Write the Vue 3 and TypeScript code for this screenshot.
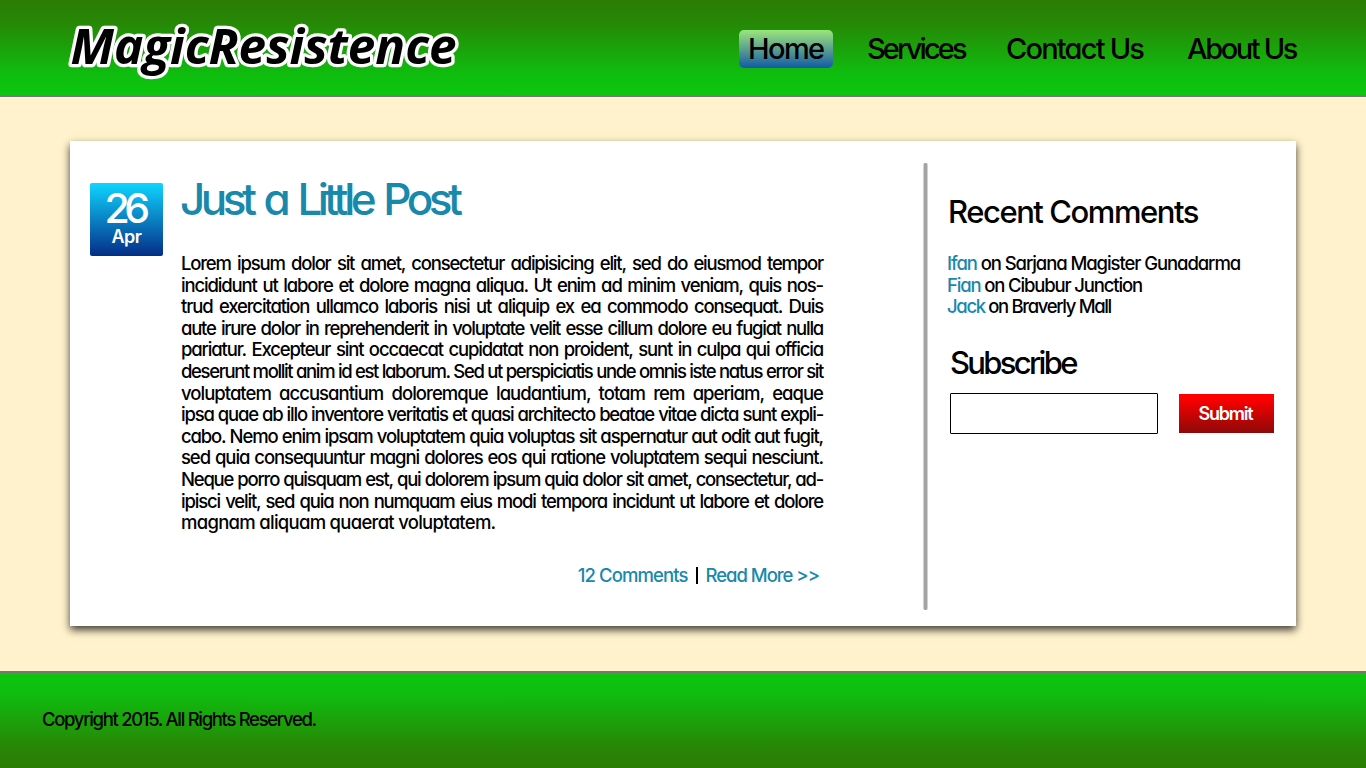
<script setup lang="ts">
interface NavItem {
  label: string
  cls: string
}

interface Line {
  text: string
  tracking: number
}

interface Comment {
  author: string
  place: string
}

const navItems: NavItem[] = [
  { label: 'Home', cls: 'home' },
  { label: 'Services', cls: 'services' },
  { label: 'Contact Us', cls: 'contact' },
  { label: 'About Us', cls: 'about' },
]

const lines: Line[] = [
  { text: 'Lorem ipsum dolor sit amet, consectetur adipisicing elit, sed do eiusmod tempor', tracking: -1.2 },
  { text: 'incididunt ut labore et dolore magna aliqua. Ut enim ad minim veniam, quis nos-', tracking: -1.15 },
  { text: 'trud exercitation ullamco laboris nisi ut aliquip ex ea commodo consequat. Duis', tracking: -1.15 },
  { text: 'aute irure dolor in reprehenderit in voluptate velit esse cillum dolore eu fugiat nulla', tracking: -1.25 },
  { text: 'pariatur. Excepteur sint occaecat cupidatat non proident, sunt in culpa qui officia', tracking: -1.15 },
  { text: 'deserunt mollit anim id est laborum. Sed ut perspiciatis unde omnis iste natus error sit', tracking: -1.37 },
  { text: 'voluptatem accusantium doloremque laudantium, totam rem aperiam, eaque', tracking: -0.98 },
  { text: 'ipsa quae ab illo inventore veritatis et quasi architecto beatae vitae dicta sunt expli-', tracking: -1.22 },
  { text: 'cabo. Nemo enim ipsam voluptatem quia voluptas sit aspernatur aut odit aut fugit,', tracking: -1.16 },
  { text: 'sed quia consequuntur magni dolores eos qui ratione voluptatem sequi nesciunt.', tracking: -1.1 },
  { text: 'Neque porro quisquam est, qui dolorem ipsum quia dolor sit amet, consectetur, ad-', tracking: -1.24 },
  { text: 'ipisci velit, sed quia non numquam eius modi tempora incidunt ut labore et dolore', tracking: -1.17 },
  { text: 'magnam aliquam quaerat voluptatem.', tracking: -0.72 },
]

const comments: Comment[] = [
  { author: 'Ifan', place: 'Sarjana Magister Gunadarma' },
  { author: 'Fian', place: 'Cibubur Junction' },
  { author: 'Jack', place: 'Braverly Mall' },
]
</script>

<template>
  <div class="page">
    <header class="header">
      <svg class="logo" width="400" height="90" viewBox="0 0 400 90">
        <text x="2.5" y="64.4" textLength="386" lengthAdjust="spacingAndGlyphs">MagicResistence</text>
      </svg>
      <nav class="nav">
        <a v-for="item in navItems" :key="item.label" class="nav-item" :class="item.cls">{{ item.label }}</a>
      </nav>
    </header>

    <main class="card">
      <div class="date">
        <span class="day">26</span>
        <span class="month">Apr</span>
      </div>

      <article class="post">
        <h2 class="title">Just a Little Post</h2>
        <div class="body">
          <div v-for="(line, i) in lines" :key="i" class="line" :style="{ letterSpacing: line.tracking + 'px' }">{{ line.text }}</div>
        </div>
        <div class="actions">
          <a class="link comments-link">12 Comments</a>
          <span class="bar"></span>
          <a class="link more-link">Read More &gt;&gt;</a>
        </div>
      </article>

      <div class="divider"></div>

      <aside class="side">
        <h3 class="recent">Recent Comments</h3>
        <ul class="list">
          <li v-for="c in comments" :key="c.author" :class="c.author.toLowerCase()">
            <a class="link">{{ c.author }}</a> on {{ c.place }}
          </li>
        </ul>
        <h3 class="subscribe">Subscribe</h3>
        <form class="form" @submit.prevent>
          <input class="field" type="text" />
          <button class="submit" type="submit">Submit</button>
        </form>
      </aside>
    </main>

    <footer class="footer">Copyright 2015. All Rights Reserved.</footer>
  </div>
</template>

<style>
html,
body {
  margin: 0;
  overflow: hidden;
}
</style>

<style scoped>
.page {
  width: 1366px;
  height: 768px;
  box-sizing: border-box;
  display: flex;
  flex-direction: column;
  background: #fff2cc;
  color: #000;
  font-family: Inter, 'Century Gothic', sans-serif;
  font-weight: 450;
  font-feature-settings: 'cv11' 1, 'calt' 0;
  white-space: nowrap;
}

h1,
h2,
h3,
ul {
  margin: 0;
  padding: 0;
  font-weight: 450;
  list-style: none;
}

.header {
  box-sizing: border-box;
  height: 97px;
  display: flex;
  justify-content: space-between;
  padding: 0 69px 0 68px;
  background: linear-gradient(#2b7d03 0%, #278606 22%, #0fbd0f 78%, #0bc70d 100%);
  border-bottom: 2px solid #777;
}

.logo text {
  font-family: 'Open Sans', sans-serif;
  font-size: 48px;
  font-weight: 740;
  font-style: italic;
  fill: #000;
  stroke: #fff;
  stroke-width: 6.5px;
  stroke-linejoin: round;
  paint-order: stroke fill;
}

.nav {
  display: flex;
  margin-top: 30px;
  height: 38px;
  font-size: 29px;
  line-height: 37px;
}

.home {
  box-sizing: border-box;
  width: 94px;
  padding-left: 9px;
  border-radius: 5px;
  background: linear-gradient(#9be67c, #5c9f90 50%, #105ba8);
  letter-spacing: -1.6px;
}

.services {
  width: 98px;
  margin-left: 34px;
  letter-spacing: -2.9px;
}

.contact {
  width: 137px;
  margin-left: 41px;
  letter-spacing: -1.8px;
}

.about {
  width: 110px;
  margin-left: 44px;
  letter-spacing: -2.4px;
}

.card {
  box-sizing: border-box;
  width: 1226px;
  height: 485px;
  margin: 44px 0 0 70px;
  padding-left: 20px;
  display: flex;
  background: #fff;
  box-shadow: 0 4px 8px rgba(0, 0, 0, 0.75);
}

.date {
  width: 73px;
  height: 73px;
  margin-top: 42px;
  flex: none;
  display: flex;
  flex-direction: column;
  align-items: center;
  border-radius: 2px;
  background: linear-gradient(#0fd5ff, #042d86);
  color: #fff;
}

.day {
  margin-top: 5px;
  font-size: 41px;
  line-height: 41px;
  font-weight: 550;
  letter-spacing: -5.5px;
  margin-right: 4px;
}

.month {
  font-size: 18px;
  line-height: 16px;
  letter-spacing: -0.5px;
  font-weight: 600;
}

.post {
  width: 642px;
  margin-left: 18px;
  padding-top: 34px;
  flex: none;
}

.title {
  font-size: 44px;
  line-height: 48px;
  margin-left: -1px;
  letter-spacing: -4.5px;
  word-spacing: 3.9px;
  color: #1888ab;
  font-weight: 500;
}

.body {
  margin-top: 30px;
  font-size: 18.5px;
  line-height: 21.6px;
}

.line {
  height: 21.6px;
  white-space: normal;
  text-align: justify;
  text-align-last: justify;
}

.line:last-child {
  text-align-last: left;
}

.actions {
  display: flex;
  justify-content: flex-end;
  align-items: center;
  height: 22px;
  margin-top: 30px;
  padding-right: 4px;
  font-size: 18.5px;
}

.comments-link {
  letter-spacing: -0.9px;
}

.more-link {
  letter-spacing: -1.02px;
}

.link {
  color: #1888ab;
}

.bar {
  width: 2px;
  height: 17px;
  margin: 2px 7px 0 9px;
  background: #000;
}

.divider {
  flex: none;
  width: 5px;
  height: 447px;
  margin: 22px 0 0 100px;
  border-radius: 2px;
  background: linear-gradient(to right, #d0d0d0 1px, #a4a4a4 1px, #a4a4a4 4px, #d0d0d0 4px);
}

.side {
  margin-left: 19px;
  padding-top: 51px;
}

.recent {
  margin-left: 1px;
  font-size: 31px;
  line-height: 40px;
  letter-spacing: -1.45px;
}

.list {
  margin-top: 21px;
  font-size: 18.5px;
  line-height: 21.7px;
}

.ifan {
  letter-spacing: -1.08px;
}

.fian {
  letter-spacing: -1.15px;
}

.jack {
  letter-spacing: -1.35px;
}

.subscribe {
  margin: 25px 0 0 3px;
  font-size: 31px;
  line-height: 40px;
  letter-spacing: -2.7px;
  font-weight: 500;
}

.form {
  display: flex;
  margin: 10px 0 0 3px;
}

.field {
  box-sizing: border-box;
  width: 208px;
  height: 41px;
  border: 1px solid #000;
  border-radius: 1px;
  background: #fff;
  outline: none;
}

.submit {
  width: 95px;
  height: 39px;
  margin: 1px 0 0 21px;
  padding: 0 2px 0 0;
  border: 0;
  background: linear-gradient(#ff0000 10%, #8e0808);
  color: #fff;
  font-family: inherit;
  font-feature-settings: inherit;
  font-size: 18px;
  font-weight: 600;
  letter-spacing: -1.2px;
}

.footer {
  box-sizing: border-box;
  height: 97px;
  margin-top: 45px;
  padding-left: 42px;
  background: linear-gradient(#0bc70d 0%, #0fbd0f 22%, #278606 78%, #2b7d03 100%);
  border-top: 2px solid #777;
  font-size: 18.5px;
  line-height: 93px;
  letter-spacing: -1.32px;
}
</style>
